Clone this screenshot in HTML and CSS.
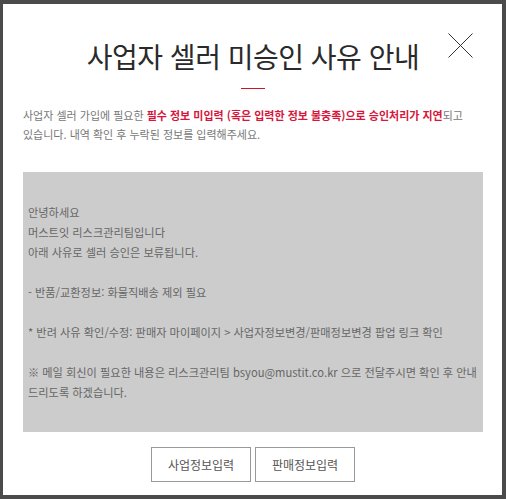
FILE: index.html
```html
<!DOCTYPE html>
<html lang="ko">
<head>
<meta charset="utf-8">
<link rel="stylesheet" href="styles.css">
</head>
<body>
<div class="modal">
  <button class="close" aria-label="닫기">
    <svg width="25" height="25" viewBox="0 0 25 25"><path d="M0.5 0.5 L24.5 24.5 M24.5 0.5 L0.5 24.5" stroke="#333" stroke-width="1" fill="none"/></svg>
  </button>
  <h1 class="title">사업자 셀러 미승인 사유 안내</h1>
  <div class="rule"></div>
  <p class="lead">사업자 셀러 가입에 필요한 <strong class="em">필수 정보 미입력 (혹은 입력한 정보 불충족)으로 승인처리가 지연</strong>되고 <span class="line">있습니다. 내역 확인 후 누락된 정보를 입력해주세요.</span></p>
  <div class="reason">
    <p>안녕하세요<br>머스트잇 리스크관리팀입니다<br>아래 사유로 셀러 승인은 보류됩니다.</p>
    <p>- 반품/교환정보: 화물직배송 제외 필요</p>
    <p>* 반려 사유 확인/수정: 판매자 마이페이지 &gt; 사업자정보변경/판매정보변경 팝업 링크 확인</p>
    <p>※ 메일 회신이 필요한 내용은 리스크관리팀 bsyou@mustit.co.kr 으로 전달주시면 확인 후 안내드리도록 하겠습니다.</p>
  </div>
  <div class="actions">
    <button class="btn">사업정보입력</button>
    <button class="btn">판매정보입력</button>
  </div>
</div>
</body>
</html>
```
FILE: styles.css
```css
html, body {
  margin: 0;
  padding: 0;
}
body {
  background: #4b4b4b;
  font-family: "Noto Sans CJK KR", "Noto Sans", sans-serif;
  width: 506px;
  height: 499px;
  overflow: hidden;
}
.modal {
  position: relative;
  box-sizing: border-box;
  width: 499px;
  height: 491px;
  margin: 4px 0 0 3px;
  background: #fff;
  padding: 32px 19px 0 20px;
}
.close {
  position: absolute;
  left: 445px;
  top: 29px;
  width: 25px;
  height: 25px;
  padding: 0;
  border: 0;
  background: transparent;
}
.close svg { display: block; }
.title {
  margin: 0;
  text-align: center;
  font-size: 28px;
  line-height: 40px;
  font-weight: 400;
  color: #2a2a2a;
  letter-spacing: -0.5px;
}
.rule {
  width: 24px;
  height: 1px;
  background: #d0112b;
  margin: 12px auto 0;
}
.lead {
  margin: 17px 0 0;
  font-size: 11px;
  line-height: 19px;
  color: #777;
  word-break: keep-all;
}
.lead .line {
  display: block;
}
.em {
  color: #d6163c;
  font-weight: 700;
}
.reason {
  margin-top: 28px;
  background: #cccccc;
  padding: 30px 4px 30px 5px;
  height: 260px;
  box-sizing: border-box;
  font-size: 11.2px;
  line-height: 20px;
  color: #666;
}
.reason p {
  margin: 0 0 20px;
}
.reason p:last-child { margin-bottom: 0; }
.actions {
  display: flex;
  justify-content: center;
  gap: 4px;
  margin-top: 15px;
}
.btn {
  width: 100px;
  height: 35px;
  border: 1px solid #999;
  background: #fff;
  font-family: inherit;
  font-size: 12px;
  color: #555;
  padding: 0;
}
```
